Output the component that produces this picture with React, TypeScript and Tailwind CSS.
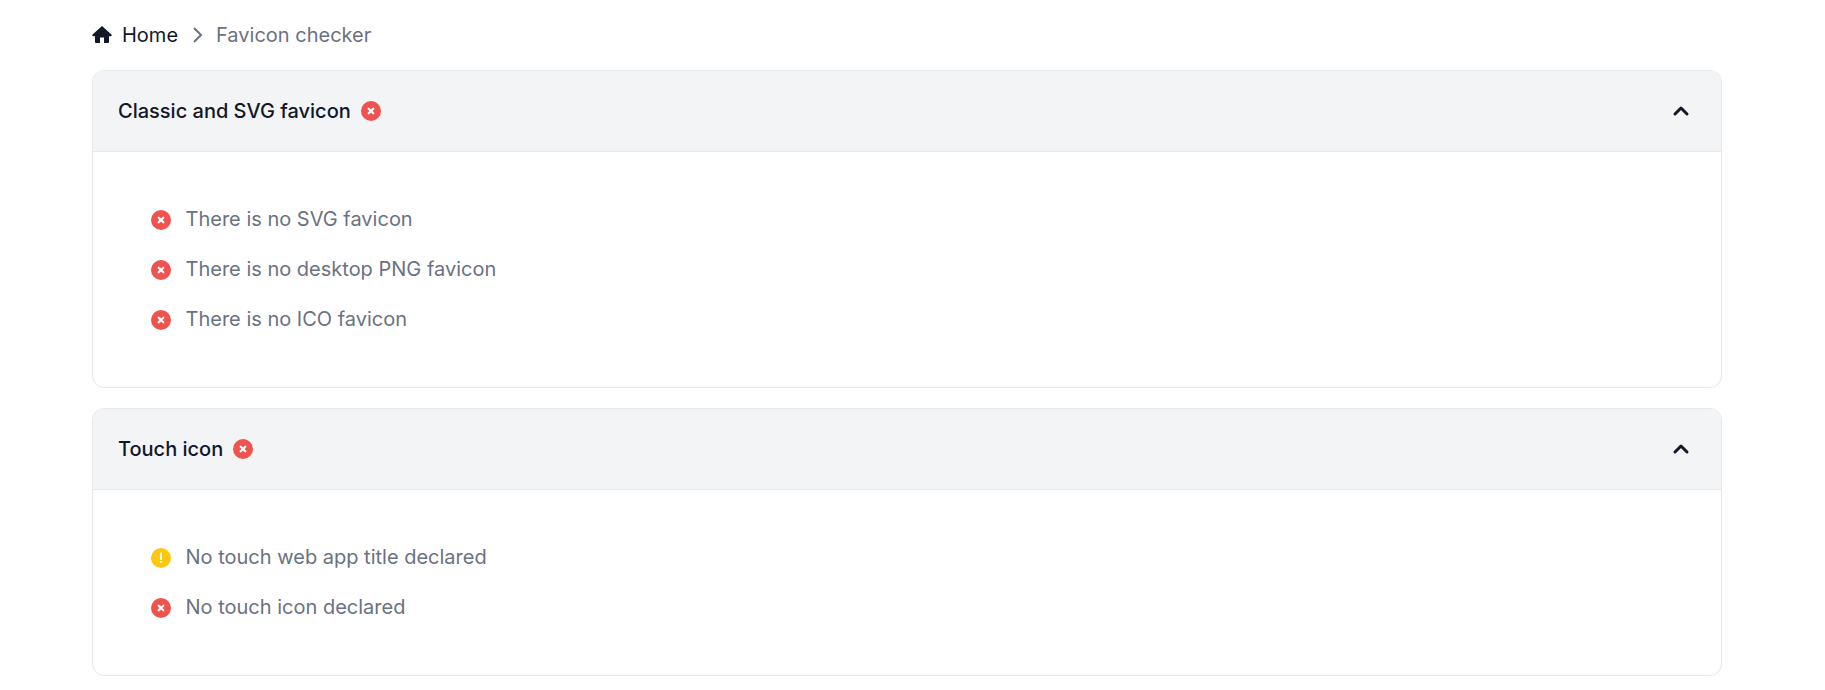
const IconError = ({ nudge = false }: { nudge?: boolean }) => (
  <svg viewBox="0 0 20 20" className={nudge ? "w-5 h-5 shrink-0 translate-y-px" : "w-5 h-5 shrink-0"}>
    <circle cx="10" cy="10" r="10" fill="#ef5350" />
    <path d="M7.7 7.7l4.6 4.6M12.3 7.7l-4.6 4.6" stroke="#fff" strokeWidth="2.2" strokeLinecap="round" />
  </svg>
);

const IconWarn = () => (
  <svg viewBox="0 0 20 20" className="w-5 h-5 shrink-0 translate-y-px">
    <circle cx="10" cy="10" r="10" fill="#fbc70f" />
    <path d="M10 5.5v5.5" stroke="#fff" strokeWidth="2" strokeLinecap="round" />
    <circle cx="10" cy="14" r="1.1" fill="#fff" />
  </svg>
);

const Chevron = () => (
  <svg viewBox="0 0 24 24" className="w-6 h-6" fill="none" stroke="#111827" strokeWidth="3" strokeLinecap="round" strokeLinejoin="round">
    <path d="M6 15l6-6 6 6" />
  </svg>
);

const Section = ({ title, items }: { title: string; items: { kind: string; text: string }[] }) => (
  <div className="border border-gray-200 rounded-xl overflow-hidden">
    <div className="h-[81px] bg-gray-100 border-b border-gray-200 flex items-center justify-between pl-[25px] pr-[28px]">
      <div className="flex items-center gap-[10px]">
        <span className="text-xl font-medium text-gray-900">{title}</span>
        <IconError />
      </div>
      <Chevron />
    </div>
    <div className="pt-[42px] pb-[43px] pl-[58px] flex flex-col">
      {items.map((it) => (
        <div key={it.text} className="h-[50px] flex items-center gap-[14.5px]">
          {it.kind === "warn" ? <IconWarn /> : <IconError nudge />}
          <span className="text-xl text-gray-500">{it.text}</span>
        </div>
      ))}
    </div>
  </div>
);

export default function App() {
  return (
    <div className="bg-white min-h-[690px] pl-[92px] pr-[103px] font-['Inter',sans-serif]">
      <div className="h-[70px] flex items-center text-xl">
        <svg viewBox="0 0 20 20" className="w-5 h-5 mr-[10px]" fill="#111827">
          <path d="M10 1L.6 9.6a.9.9 0 0 0 .6 1.6H3V17a1 1 0 0 0 1 1h4v-5.5h4V18h4a1 1 0 0 0 1-1v-5.8h1.8a.9.9 0 0 0 .6-1.6z" />
        </svg>
        <span className="text-gray-900">Home</span>
        <svg viewBox="0 0 24 24" className="w-6 h-6 mx-[7px]" fill="none" stroke="#6b7280" strokeWidth="2">
          <path d="M9 5l7 7-7 7" />
        </svg>
        <span className="text-gray-500">Favicon checker</span>
      </div>
      <div className="flex flex-col gap-5">
        <Section
          title="Classic and SVG favicon"
          items={[
            { kind: "error", text: "There is no SVG favicon" },
            { kind: "error", text: "There is no desktop PNG favicon" },
            { kind: "error", text: "There is no ICO favicon" },
          ]}
        />
        <Section
          title="Touch icon"
          items={[
            { kind: "warn", text: "No touch web app title declared" },
            { kind: "error", text: "No touch icon declared" },
          ]}
        />
      </div>
    </div>
  );
}
